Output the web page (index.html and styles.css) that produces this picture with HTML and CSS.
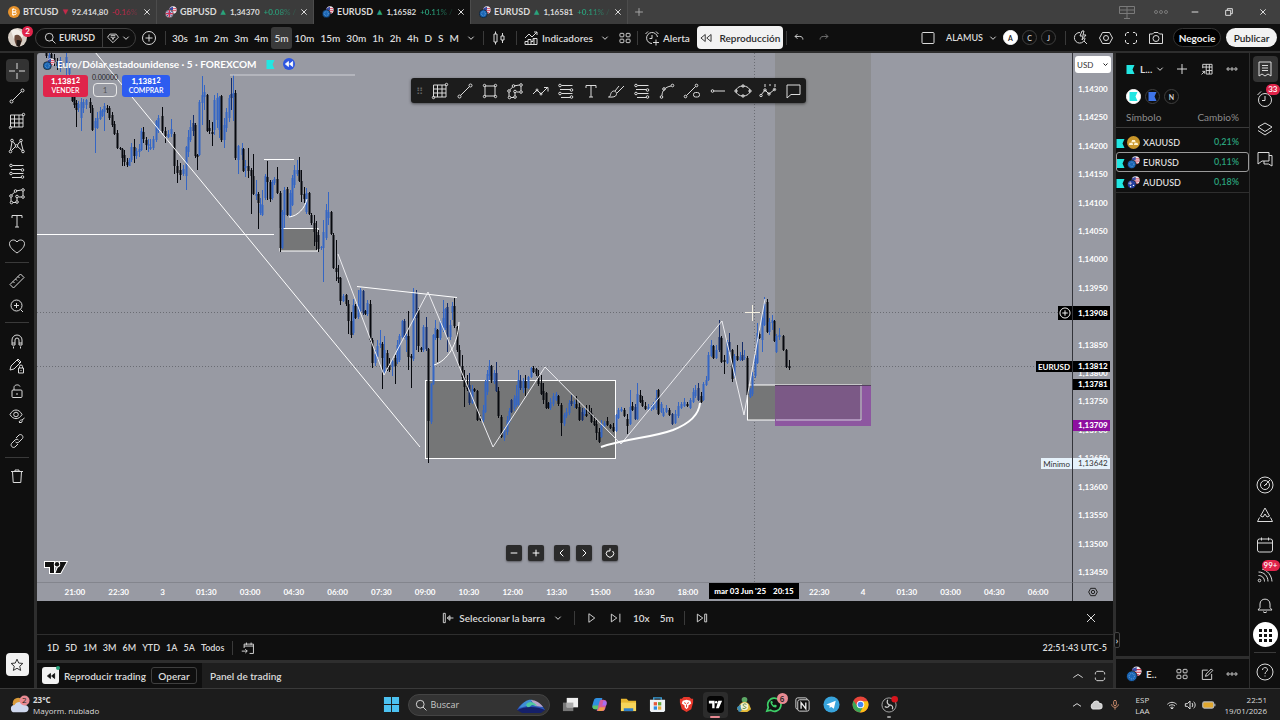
FILE: index.html
```html
<!DOCTYPE html>
<html lang="es">
<head>
    <meta charset="UTF-8">
    <meta name="viewport" content="width=device-width, initial-scale=1.0">
    <title>EURUSD 1,16582 +0.11%</title>
    <link rel="stylesheet" href="styles.css">
</head>
<body>
    <!-- Icon set -->
    <svg class="sprite" aria-hidden="true">
        <symbol id="i-close" viewBox="0 0 18 18"><path d="M5 5l8 8M13 5l-8 8"/></symbol>
        <symbol id="i-plus" viewBox="0 0 18 18"><path d="M9 4v10M4 9h10"/></symbol>
        <symbol id="i-minus" viewBox="0 0 18 18"><path d="M4 9h10"/></symbol>
        <symbol id="i-down" viewBox="0 0 18 18"><path d="M5 7l4 4 4-4"/></symbol>
        <symbol id="i-up" viewBox="0 0 18 18"><path d="M3 11l6-4 6 4"/></symbol>
        <symbol id="i-left" viewBox="0 0 18 18"><path d="M11 4L6 9l5 5"/></symbol>
        <symbol id="i-right" viewBox="0 0 18 18"><path d="M7 4l5 5-5 5"/></symbol>
        <symbol id="i-reset" viewBox="0 0 18 18"><path d="M5 6a5.5 5.5 0 1 0 8 0M5 6h4M9 6V2"/></symbol>
        <symbol id="i-dots" viewBox="0 0 18 18"><circle cx="4" cy="9" r="1.5"/><circle cx="9" cy="9" r="1.5"/><circle cx="14" cy="9" r="1.5"/></symbol>
        <symbol id="i-search" viewBox="0 0 18 18"><circle cx="8" cy="8" r="5"/><path d="M11.500 11.500L16 16"/></symbol>
        <symbol id="i-gem" viewBox="0 0 18 18"><path d="M5 4h8l3 4-7 7-7-7zM6 8h2l1 3 1-3h2M6 6h6"/></symbol>
        <symbol id="i-add" viewBox="0 0 18 18"><circle cx="9" cy="9" r="6.5"/><path d="M9 5.500v7M5.500 9h7"/></symbol>
        <symbol id="i-candles" viewBox="0 0 18 18"><path d="M4 5h3v8H4zM5.500 2.500V5M5.500 13v2.500M11 7h3v4h-3zM12.500 4v3M12.500 11v3"/></symbol>
        <symbol id="i-indicators" viewBox="0 0 18 18"><path d="M3 9l4-4 3 3 5-5M12 3h3v3M3 15.500v-3h3v-2h3v2h2v-3h4v6zM6 12.500v3M9 12.500v3M12 10v5"/></symbol>
        <symbol id="i-grid4" viewBox="0 0 18 18"><rect x="2.500" y="3" width="5" height="4.500" rx="1"/><rect x="10.500" y="3" width="5" height="4.500" rx="1"/><rect x="2.500" y="10.500" width="5" height="4.500" rx="1"/><rect x="10.500" y="10.500" width="5" height="4.500" rx="1"/></symbol>
        <symbol id="i-alert" viewBox="0 0 18 18"><path d="M14.500 8A5.500 5.500 0 1 0 9 14.500M9 6v3.500H6.500M2.500 5l2.500-2.500M13 2.500L15.500 5M13 10.500v6M10 13.500h6"/></symbol>
        <symbol id="i-rewind" viewBox="0 0 18 18"><path d="M8 4.500v9L2.500 9zM15.500 4.500v9L10 9z"/></symbol>
        <symbol id="i-undo" viewBox="0 0 18 18"><path d="M7 4L4 7l3 3M4 7h6c3 0 4 2 4 4"/></symbol>
        <symbol id="i-redo" viewBox="0 0 18 18"><path d="M11 4l3 3-3 3M14 7H8c-3 0-4 2-4 4"/></symbol>
        <symbol id="i-layout" viewBox="0 0 18 18"><rect x="3" y="3.500" width="12" height="11" rx="1"/></symbol>
        <symbol id="i-quick" viewBox="0 0 18 18"><path d="M8 3.500A5.300 5.300 0 1 0 13 9M12 12l3 3M10 2L8 7h3l-1 4 4-5h-3l1-4z"/></symbol>
        <symbol id="i-settings" viewBox="0 0 18 18"><path d="M5.500 3.500h7L15.500 9l-3 5.500h-7L2.500 9z"/><circle cx="9" cy="9" r="2.500"/></symbol>
        <symbol id="i-full" viewBox="0 0 18 18"><path d="M3.500 7V5L5 3.500h2M11 3.500h2L14.500 5v2M14.500 11v2L13 14.500h-2M7 14.500H5L3.500 13v-2"/></symbol>
        <symbol id="i-camera" viewBox="0 0 18 18"><path d="M2.500 5h3L7 3.500h4L12.500 5h3v9.500h-13z"/><circle cx="9" cy="9.500" r="3"/></symbol>
        <symbol id="i-cross" viewBox="0 0 18 18"><path d="M9 1v6M9 11v6M1 9h6M11 9h6"/></symbol>
        <symbol id="i-trend" viewBox="0 0 18 18"><circle cx="3.500" cy="14.500" r="1.500"/><circle cx="14.500" cy="3.500" r="1.500"/><path d="M4.500 13.500l9-9"/></symbol>
        <symbol id="i-gann" viewBox="0 0 18 18"><path d="M2.500 3v12h12.500V3zM2.500 7h12.500M2.500 11h12.500M6.500 3v12M11 3v12"/><circle cx="2.500" cy="15.500" r="1.200"/><circle cx="15.500" cy="2.500" r="1.200"/></symbol>
        <symbol id="i-pattern" viewBox="0 0 18 18"><circle cx="4" cy="3.500" r="1.300"/><circle cx="13" cy="3.500" r="1.300"/><circle cx="8.500" cy="9" r="1.300"/><circle cx="2.500" cy="14.500" r="1.300"/><circle cx="15" cy="14.500" r="1.300"/><path d="M4 5l-1.500 8M13 5l2 8M5 4.500L7.500 8M12 4.500L9.500 8M3.500 13.500l4-4M14 13.500l-4.500-4"/></symbol>
        <symbol id="i-fib" viewBox="0 0 18 18"><path d="M4.500 3.500h11M3 7.500h10M4.500 11.500h11M4 15.500h9"/><circle cx="3" cy="3.500" r="1.300"/><circle cx="14.500" cy="8" r="1.300"/><circle cx="3" cy="11.500" r="1.300"/><circle cx="14.500" cy="15" r="1.300"/></symbol>
        <symbol id="i-shape" viewBox="0 0 18 18"><path d="M8.500 3.800L13.500 3M15 4.500v4M13.500 10H10.500M9 10.500v3M3.800 7.800L6.800 5M3 10.500v4M5 15.500h3"/><circle cx="7.500" cy="4" r="1.300"/><circle cx="15" cy="3" r="1.300"/><circle cx="15" cy="10" r="1.300"/><circle cx="3" cy="9" r="1.300"/><circle cx="3.500" cy="15.500" r="1.300"/><circle cx="9" cy="15" r="1.300"/><circle cx="9" cy="9.500" r="1.300"/></symbol>
        <symbol id="i-text" viewBox="0 0 18 18"><path d="M4 6V3.500h10V6M9 3.500v11.500M7 15h4"/></symbol>
        <symbol id="i-heart" viewBox="0 0 18 18"><path d="M9 16C5 13 1.500 10.500 1.500 6.500 1.500 3 6.500 1.500 9 5c2.500-3.500 7.500-2 7.500 1.500C16.500 10.500 13 13 9 16z"/></symbol>
        <symbol id="i-ruler" viewBox="0 0 18 18"><path d="M2 12.500L12.500 2 16 5.500 5.500 16zM5 9.500L6.500 11M7.500 7L9 8.500M10 4.500L11.500 6"/></symbol>
        <symbol id="i-zoom" viewBox="0 0 18 18"><circle cx="8.500" cy="8.500" r="5.500"/><path d="M12.500 12.500l2.500 2.500M8.500 6v5M6 8.500h5"/></symbol>
        <symbol id="i-magnet" viewBox="0 0 18 18"><path d="M4 13V8a5 5 0 0 1 10 0v5h-3V8a2 2 0 0 0-4 0v5zM4 11h3M11 11h3M5.500 14.500v2M12.500 14.500v2"/></symbol>
        <symbol id="i-lockpen" viewBox="0 0 18 18"><path d="M2 13l1-4 7-7 3 3-7 7zM9 3l3 3M10.500 11h5v5h-5zM11.500 11V9.500a1.500 1.500 0 0 1 3 0V11M13 13v1"/></symbol>
        <symbol id="i-lock" viewBox="0 0 18 18"><rect x="4" y="8" width="10" height="7.500" rx="1"/><path d="M6 8V5.500C6 2.500 11 2 12 4.500M9 11v2"/></symbol>
        <symbol id="i-eye" viewBox="0 0 18 18"><path d="M2 7.500c3-6 9-6 12 0-3 5.500-9 5.500-12 0zM11 15c1-2 2-2 3-2l2.500-2M11 15.500h2.500l1-2"/><circle cx="8" cy="7.500" r="2.300"/></symbol>
        <symbol id="i-link" viewBox="0 0 18 18"><path d="M8 6l3-3c2-1.500 5 1 3.500 3.500L11 10c-1 1-3 1-3.500 0M10 12l-3 3c-2 1.500-5-1-3.500-3.500L7 8c1-1 3-1 3.500 0"/></symbol>
        <symbol id="i-trash" viewBox="0 0 18 18"><path d="M3 4.500h12M7 4.500V3h4v1.500M4.500 4.500l.7 11h7.600l.7-11"/></symbol>
        <symbol id="i-star" viewBox="0 0 18 18"><path d="M9 1.500l2.200 5 5.300.5-4 3.600 1.200 5.400L9 13.200 4.300 16l1.200-5.400-4-3.600 5.300-.5z"/></symbol>
        <symbol id="i-rect" viewBox="0 0 18 18"><path d="M4 4h10v10H4z"/><circle cx="3.500" cy="3.500" r="1.200"/><circle cx="14.500" cy="3.500" r="1.200"/><circle cx="3.500" cy="14.500" r="1.200"/><circle cx="14.500" cy="14.500" r="1.200"/></symbol>
        <symbol id="i-path" viewBox="0 0 18 18"><path d="M1 12l4-4 4 4 6-6M12 5.500h4v4"/><circle cx="5" cy="8" r="1"/><circle cx="9" cy="12" r="1"/></symbol>
        <symbol id="i-brush" viewBox="0 0 18 18"><path d="M1.500 15c3 0 1-5 5-6 3 0 4 3 2 5-2 1.500-5 1-7 1zM8 9l4-5M10 11l7-7"/></symbol>
        <symbol id="i-curve" viewBox="0 0 18 18"><path d="M4 13.500C4 9 7 5 13 4"/><circle cx="3.500" cy="15" r="1.300"/><circle cx="6" cy="7" r="1.300"/><circle cx="14.500" cy="3.500" r="1.300"/></symbol>
        <symbol id="i-info" viewBox="0 0 18 18"><path d="M3.500 13.500l9-9"/><circle cx="2.500" cy="14.500" r="1.300"/><circle cx="13.500" cy="3.500" r="1.300"/><rect x="10.500" y="10.500" width="6" height="4.500" rx="2"/></symbol>
        <symbol id="i-ray" viewBox="0 0 18 18"><circle cx="3.500" cy="9" r="1.300"/><path d="M5 9h11"/></symbol>
        <symbol id="i-ellipse" viewBox="0 0 18 18"><ellipse cx="9" cy="9" rx="7" ry="5"/><circle cx="2" cy="9" r="1.200"/><circle cx="16" cy="9" r="1.200"/><circle cx="9" cy="4" r="1.200"/><circle cx="9" cy="14" r="1.200"/></symbol>
        <symbol id="i-elliott" viewBox="0 0 18 18"><path d="M2 13l4-5 4 4 6-5M6 2v3M11 2v2M16 2v3"/><circle cx="2" cy="13.500" r="1.200"/><circle cx="6" cy="8" r="1.200"/><circle cx="10" cy="12" r="1.200"/><circle cx="15.500" cy="7.500" r="1.200"/></symbol>
        <symbol id="i-note" viewBox="0 0 18 18"><path d="M3 3h13v9.500H7L3 16z"/></symbol>
        <symbol id="i-tableadd" viewBox="0 0 18 18"><path d="M3.500 8V3h12v12.500H8M3.500 6.500h12M8 11h7.500M8 3v12.500M12 3v12.500M2 16l4-4M3 12h3v3"/></symbol>
        <symbol id="i-list" viewBox="0 0 18 18"><path d="M3 2h12v14l-3-2-3 2-3-2-3 2zM6 5.500h6M6 8h6M6 10.500h6"/></symbol>
        <symbol id="i-clock" viewBox="0 0 18 18"><circle cx="9" cy="10" r="6.500"/><path d="M9 6v4.500H6M1.500 5L5 1.500"/></symbol>
        <symbol id="i-layers" viewBox="0 0 18 18"><path d="M9 3l7 4-7 4.500L2 7zM2 10.500L9 15l7-4.500"/></symbol>
        <symbol id="i-chat" viewBox="0 0 18 18"><path d="M2 2.500h11v8.500H6L2 14zM13 5.500h3V16l-3.500-2H8v-3"/></symbol>
        <symbol id="i-target" viewBox="0 0 18 18"><circle cx="9" cy="9" r="8"/><circle cx="9" cy="9" r="4.500"/><path d="M8 10l6-6M9 9l2-1"/></symbol>
        <symbol id="i-pyramid" viewBox="0 0 18 18"><path d="M9 2l4.500 8-2.500 1-2-3-2 3-2.500-1zM3.500 11.500l-2 4h15l-2-4"/></symbol>
        <symbol id="i-calendar" viewBox="0 0 18 18"><rect x="1.500" y="3" width="15" height="13" rx="2"/><path d="M2 7h14M5.500 1.500v3M12.500 1.500v3"/></symbol>
        <symbol id="i-feed" viewBox="0 0 18 18"><circle cx="3.500" cy="14.500" r="1.300"/><path d="M2.500 9.500c3.500 0 6 2.500 6 6M2.500 6c5.500 0 9.500 4 9.500 9.500M6 3c5.500 1.500 9.500 6 10 12.500"/></symbol>
        <symbol id="i-bell" viewBox="0 0 18 18"><path d="M2 14l2-2.500V8c0-6.500 10-6.500 10 0v3.500l2 2.500zM7 15.500c1 1.500 3 1.500 4 0"/></symbol>
        <symbol id="i-help" viewBox="0 0 18 18"><circle cx="9" cy="9" r="8"/><path d="M6.500 7c0-3.500 5.500-3 5 0-.3 1.500-2.500 1.800-2.500 4M9 12.500v1"/></symbol>
        <symbol id="i-calgo" viewBox="0 0 18 18"><path d="M4 9V4h12v12h-5M4 6.500h12M7 2v3M13 2v3M1 13h7M5.500 10.500L8 13l-2.500 2.500"/></symbol>
        <symbol id="i-bar" viewBox="0 0 18 18"><path d="M3 3h2.500v12H3zM8 9h8M11.500 6v6L8 9z"/></symbol>
        <symbol id="i-play" viewBox="0 0 18 18"><path d="M5 3.500v11L12.500 9z"/></symbol>
        <symbol id="i-step" viewBox="0 0 18 18"><path d="M3 4v10l7-5zM14 3.500v11"/></symbol>
        <symbol id="i-live" viewBox="0 0 18 18"><path d="M3 4v10l7-5zM12.500 4h2.500v10h-2.500z"/></symbol>
        <symbol id="i-edit" viewBox="0 0 18 18"><path d="M10 4H3v12h12V9M7 12l1-3 6.500-6.500 2 2L10 11z"/></symbol>
        <symbol id="i-square" viewBox="0 0 18 18"><path d="M3 7V5l2-2h8l2 2v2M3 11v2l2 2h8l2-2v-2"/></symbol>
        <symbol id="i-windows" viewBox="0 0 18 18"><path d="M1.500 3.500h15v7h-15zM9 3.500v12M1.500 7h15M6 15.500h6"/></symbol>
        <symbol id="i-restore" viewBox="0 0 18 18"><path d="M4 6.500h7.500V14H4zM6.500 6.500V4H14v7.500h-2.500"/></symbol>
        <symbol id="flag-eur" viewBox="0 0 18 18"><circle cx="12" cy="6" r="5.500" fill="#f3e9ee"/><path d="M7 4h10M7 7h10M10 10h5" stroke="#d0324b" stroke-width="1.300"/><path d="M7 3l5-2v5H7z" fill="#3b4ea8"/><circle cx="6.500" cy="11.500" r="6" fill="#1b66b5" stroke="#101010"/><circle cx="6.500" cy="11.500" r="3" fill="none" stroke="#8cb6dd" stroke-dasharray="1 1.300"/></symbol>
        <symbol id="flag-gbp" viewBox="0 0 18 18"><circle cx="12" cy="6" r="5.500" fill="#f3e9ee"/><path d="M7 4h10M7 7h10" stroke="#d0324b" stroke-width="1.300"/><path d="M7 3l5-2v5H7z" fill="#3b4ea8"/><circle cx="6.500" cy="11.500" r="6" fill="#d9c6d8" stroke="#333"/><path d="M6.500 6v11M1 11.500h11" stroke="#d12f55" stroke-width="2"/><path d="M3 8l2 2M10 8l-2 2M3 15l2-2M10 15l-2-2" stroke="#2b4ba0" stroke-width="1.500"/></symbol>
        <symbol id="flag-aud" viewBox="0 0 18 18"><circle cx="12" cy="6" r="5.500" fill="#f3e9ee"/><path d="M7 4h10M7 7h10M10 10h5" stroke="#d0324b" stroke-width="1.300"/><path d="M7 3l5-2v5H7z" fill="#3b4ea8"/><circle cx="6.500" cy="11.500" r="6" fill="#2440a0" stroke="#101010"/><path d="M2 10h5M4.500 7.500v5" stroke="#e8d0da"/><circle cx="9" cy="13" r="1" fill="#fff"/><circle cx="5" cy="15" r="1" fill="#fff"/></symbol>
        <symbol id="coin-btc" viewBox="0 0 18 18"><circle cx="9" cy="9" r="9" fill="#e8932c"/><path d="M7 5v8M6 5h4c2.500 0 2.500 4 0 4H7h3.500c2.500 0 2.500 4 0 4H6M8 3.500V5M8 13v1.500" stroke="#fff" stroke-width="1.400"/></symbol>
        <symbol id="coin-gold" viewBox="0 0 18 18"><circle cx="9" cy="9" r="9" fill="#c9962a"/><path d="M7 5.500h4l1 3H6zM3.500 9.500h4l1 3h-6zM10.500 9.500h4l1 3h-6z" fill="#fff3d0"/></symbol>
        <symbol id="flag-mark" viewBox="0 0 18 18"><path d="M1 0h16l-4 9 4 9H1z"/></symbol>
        <symbol id="tv" viewBox="0 0 24 14"><path d="M1 1h9v11H6V6H1zM16.500 12h-5L16 1h6.500z"/><circle cx="13" cy="3.200" r="2.200"/></symbol>
    </svg>

    <!-- Window tabs -->
    <header class="titlebar">
        <div class="tab">
            <svg class="coin"><use href="#coin-btc"/></svg>
            <b>BTCUSD</b><i class="down">▼</i><span class="quote">92.414,80</span><span class="fade down">-0.16%</span>
            <button class="tab-close" aria-label="Cerrar"><svg class="icon-s"><use href="#i-close"/></svg></button>
        </div>
        <div class="tab">
            <svg class="coin"><use href="#flag-gbp"/></svg>
            <b>GBPUSD</b><i class="up">▲</i><span class="quote">1,34370</span><span class="fade up">+0.08% /</span>
            <button class="tab-close" aria-label="Cerrar"><svg class="icon-s"><use href="#i-close"/></svg></button>
        </div>
        <div class="tab active">
            <svg class="coin"><use href="#flag-eur"/></svg>
            <b>EURUSD</b><i class="up">▲</i><span class="quote">1,16582</span><span class="fade up">+0.11% /</span>
            <button class="tab-close" aria-label="Cerrar"><svg class="icon-s"><use href="#i-close"/></svg></button>
        </div>
        <div class="tab">
            <svg class="coin"><use href="#flag-eur"/></svg>
            <b>EURUSD</b><i class="up">▲</i><span class="quote">1,16581</span><span class="fade up">+0.11% /</span>
            <button class="tab-close" aria-label="Cerrar"><svg class="icon-s"><use href="#i-close"/></svg></button>
        </div>
        <button class="new-tab" aria-label="Nueva"><svg class="icon-m"><use href="#i-plus"/></svg></button>
        <div class="window-buttons">
            <button class="dim" aria-label="Ventanas"><svg class="icon"><use href="#i-windows"/></svg></button>
            <button class="dim" aria-label="Más"><svg class="icon"><use href="#i-dots"/></svg></button>
            <button aria-label="Minimizar"><svg class="icon-s"><use href="#i-minus"/></svg></button>
            <button aria-label="Restaurar"><svg class="icon-s"><use href="#i-restore"/></svg></button>
            <button aria-label="Cerrar"><svg class="icon-s"><use href="#i-close"/></svg></button>
        </div>
    </header>

    <!-- Top toolbar -->
    <div class="toolbar">
        <button class="avatar" aria-label="Perfil">
            <svg viewBox="0 0 20 20"><circle cx="10" cy="10" r="10" fill="#d8cfc6"/><path d="M3 3c6-4 12 0 13 6l-5 3-5-1z" fill="#f4efe9"/><path d="M7 8c3-2 7 0 8 5l-3 7c-4-1-6-6-5-12z" fill="#6b4a3b"/><path d="M9 13c2-1 4 0 5 1l-2 6-3-1z" fill="#1d1614"/></svg>
            <span class="badge">2</span>
        </button>
        <div class="symbol-box">
            <button class="symbol-search"><svg class="icon-m"><use href="#i-search"/></svg>EURUSD</button>
            <button class="symbol-fav" aria-label="Marcas"><svg class="icon-m"><use href="#i-gem"/></svg><svg class="icon-s"><use href="#i-down"/></svg></button>
        </div>
        <button class="cell" aria-label="Comparar"><svg class="icon"><use href="#i-add"/></svg></button>
        <span class="sep"></span>
        <div class="intervals">
            <button>30s</button><button>1m</button><button>2m</button><button>3m</button><button>4m</button><button class="on">5m</button><button>10m</button><button>15m</button><button>30m</button><button>1h</button><button>2h</button><button>4h</button><button>D</button><button>S</button><button>M</button>
            <button aria-label="Intervalos"><svg class="icon-s"><use href="#i-down"/></svg></button>
        </div>
        <span class="sep"></span>
        <button class="cell wide" aria-label="Velas"><svg class="icon"><use href="#i-candles"/></svg></button>
        <span class="sep"></span>
        <button class="labelled ind"><svg class="icon"><use href="#i-indicators"/></svg>Indicadores</button>
        <button class="cell slim" aria-label="Favoritos"><svg class="icon-s"><use href="#i-down"/></svg></button>
        <button class="cell slim" aria-label="Plantillas"><svg class="icon-m"><use href="#i-grid4"/></svg></button>
        <span class="sep"></span>
        <button class="labelled"><svg class="icon"><use href="#i-alert"/></svg>Alerta</button>
        <button class="replay-btn"><svg class="icon-m"><use href="#i-rewind"/></svg>Reproducción</button>
        <span class="sep"></span>
        <button class="cell" aria-label="Deshacer"><svg class="icon-m"><use href="#i-undo"/></svg></button>
        <button class="cell dim" aria-label="Rehacer"><svg class="icon-m"><use href="#i-redo"/></svg></button>
        <div class="toolbar-right">
            <button class="cell" aria-label="Diseño"><svg class="icon"><use href="#i-layout"/></svg></button>
            <button class="layout-name">ALAMUS<svg class="icon-s"><use href="#i-down"/></svg></button>
            <button class="round on">A</button>
            <button class="round">C</button>
            <button class="round">J</button>
            <span class="sep"></span>
            <button class="cell" aria-label="Búsqueda rápida"><svg class="icon"><use href="#i-quick"/></svg></button>
            <button class="cell" aria-label="Configuración"><svg class="icon"><use href="#i-settings"/></svg></button>
            <button class="cell" aria-label="Pantalla completa"><svg class="icon"><use href="#i-full"/></svg></button>
            <button class="cell" aria-label="Captura"><svg class="icon"><use href="#i-camera"/></svg></button>
            <button class="pill dark">Negocie</button>
            <button class="pill">Publicar</button>
        </div>
    </div>

    <main class="workspace">
        <!-- Drawing tools -->
        <nav class="tools">
            <button class="on" aria-label="Cruz"><svg class="icon"><use href="#i-cross"/></svg></button>
            <button aria-label="Tendencia"><svg class="icon"><use href="#i-trend"/></svg></button>
            <button aria-label="Gann"><svg class="icon"><use href="#i-gann"/></svg></button>
            <button aria-label="Patrones"><svg class="icon"><use href="#i-pattern"/></svg></button>
            <button aria-label="Fibonacci"><svg class="icon"><use href="#i-fib"/></svg></button>
            <button aria-label="Formas"><svg class="icon"><use href="#i-shape"/></svg></button>
            <button aria-label="Texto"><svg class="icon"><use href="#i-text"/></svg></button>
            <button aria-label="Iconos"><svg class="icon"><use href="#i-heart"/></svg></button>
            <hr>
            <button aria-label="Regla"><svg class="icon"><use href="#i-ruler"/></svg></button>
            <button aria-label="Ampliar"><svg class="icon"><use href="#i-zoom"/></svg></button>
            <hr>
            <button aria-label="Imán"><svg class="icon"><use href="#i-magnet"/></svg></button>
            <button aria-label="Modo dibujo"><svg class="icon"><use href="#i-lockpen"/></svg></button>
            <button aria-label="Bloquear"><svg class="icon"><use href="#i-lock"/></svg></button>
            <button aria-label="Ocultar"><svg class="icon"><use href="#i-eye"/></svg></button>
            <button aria-label="Enlazar"><svg class="icon"><use href="#i-link"/></svg></button>
            <hr>
            <button aria-label="Eliminar"><svg class="icon"><use href="#i-trash"/></svg></button>
            <button class="star" aria-label="Favoritos"><svg class="icon-m"><use href="#i-star"/></svg></button>
        </nav>

        <div class="center">
            <section class="chart">
                <div class="stage">
                    <svg class="plot" role="img" aria-label="Velas EURUSD 5 minutos">
                        <g transform="translate(-37 -53)">
                            <rect x="775" y="53" width="96" height="332" fill="#8c8d90"/>
                            <rect x="425.500" y="380.500" width="190" height="78" class="zone"/>
                            <rect x="280" y="228.500" width="38" height="22.500" class="zone"/>
                            <path d="M37 366.500h1036M37 312.500h1036M754.500 53v530" class="dotted"/>
                            <rect x="747.500" y="385" width="114" height="35" class="zone"/>
                            <rect x="775" y="385" width="96" height="41" fill="#8d57a0"/>
                            <rect x="775" y="385" width="87" height="34" fill="#7b5986"/>
                            <path d="M776 420h85V385" class="line soft"/>
                            <path d="M775 385.500h96" stroke="#55405f"/>
                            <g id="candles"></g>
                            <path d="M95 52L420 447M37 234.500h237M264 159.500h30M357 286.500l100 11" class="line"/>
                            <path d="M230 75h125" class="line soft"/>
                            <path d="M338 254l46 121 44-83 65 155 52-80 76 77 101-123 22 94 21-116" class="line thin"/>
                            <path d="M289 217c9-1 16-9 18-18M434 365c13-4 24-20 25-43" class="line"/>
                            <path d="M601 447c27-9 50-9 72-17 18-7 26-16 27-27" class="line thick"/>
                            <path d="M752.500 305v16M745 312.500h15" stroke="#f4efe0"/>
                        </g>
                    </svg>

                    <div class="legend">
                        <svg class="coin"><use href="#flag-eur"/></svg>
                        <h1>Euro/Dólar estadounidense · 5 · FOREXCOM</h1>
                        <svg class="mark cyan"><use href="#flag-mark"/></svg>
                        <span class="replay-dot"><svg class="icon-s"><use href="#i-rewind"/></svg></span>
                    </div>
                    <div class="orders">
                        <button class="order sell"><b>1,1381<sup>2</sup></b>VENDER</button>
                        <label class="qty">0.00000<input type="text" value="1"></label>
                        <button class="order buy"><b>1,1381<sup>2</sup></b>COMPRAR</button>
                    </div>

                    <div class="favbar">
                        <span class="grip">⠿</span>
                        <button aria-label="Gann"><svg class="icon"><use href="#i-gann"/></svg></button>
                        <button aria-label="Tendencia"><svg class="icon"><use href="#i-trend"/></svg></button>
                        <button aria-label="Rectángulo"><svg class="icon"><use href="#i-rect"/></svg></button>
                        <button aria-label="Forma"><svg class="icon"><use href="#i-shape"/></svg></button>
                        <button aria-label="Ruta"><svg class="icon"><use href="#i-path"/></svg></button>
                        <button aria-label="Fibonacci"><svg class="icon"><use href="#i-fib"/></svg></button>
                        <button aria-label="Texto"><svg class="icon"><use href="#i-text"/></svg></button>
                        <button aria-label="Pincel"><svg class="icon"><use href="#i-brush"/></svg></button>
                        <button aria-label="Extensión"><svg class="icon"><use href="#i-fib"/></svg></button>
                        <button aria-label="Curva"><svg class="icon"><use href="#i-curve"/></svg></button>
                        <button aria-label="Información"><svg class="icon"><use href="#i-info"/></svg></button>
                        <button aria-label="Rayo"><svg class="icon"><use href="#i-ray"/></svg></button>
                        <button aria-label="Elipse"><svg class="icon"><use href="#i-ellipse"/></svg></button>
                        <button aria-label="Elliott"><svg class="icon"><use href="#i-elliott"/></svg></button>
                        <button aria-label="Nota"><svg class="icon"><use href="#i-note"/></svg></button>
                    </div>

                    <div class="zoom-nav">
                        <button aria-label="Alejar"><svg class="icon-s"><use href="#i-minus"/></svg></button>
                        <button aria-label="Acercar"><svg class="icon-s"><use href="#i-plus"/></svg></button>
                        <button class="apart" aria-label="Izquierda"><svg class="icon-s"><use href="#i-left"/></svg></button>
                        <button aria-label="Derecha"><svg class="icon-s"><use href="#i-right"/></svg></button>
                        <button class="apart" aria-label="Restablecer"><svg class="icon-s"><use href="#i-reset"/></svg></button>
                    </div>
                    <svg class="tv-mark"><use href="#tv"/></svg>
                    <span class="axis-name plus"><svg class="icon-m"><use href="#i-add"/></svg></span>
                    <span class="axis-name sym">EURUSD</span>
                    <span class="axis-name min">Mínimo</span>
                </div>

                <div class="price-axis">
                    <select class="currency" aria-label="Moneda"><option>USD</option></select>
                    <svg class="currency-arrow"><use href="#i-down"/></svg>
                    <span>1,14300</span><span>1,14250</span><span>1,14200</span><span>1,14150</span><span>1,14100</span><span>1,14050</span><span>1,14000</span><span>1,13950</span><span>&nbsp;</span><span>1,13850</span><span>1,13800</span><span>1,13750</span><span>1,13700</span><span>1,13650</span><span>1,13600</span><span>1,13550</span><span>1,13500</span><span>1,13450</span>
                    <b class="tag cursor">1,13908</b>
                    <b class="tag last">1,13812</b>
                    <b class="tag entry">1,13781</b>
                    <b class="tag stop">1,13709</b>
                    <b class="tag low">1,13642</b>
                </div>

                <div class="time-axis">
                    <span>21:00</span><span>22:30</span><span>3</span><span>01:30</span><span>03:00</span><span>04:30</span><span>06:00</span><span>07:30</span><span>09:00</span><span>10:30</span><span>12:00</span><span>13:30</span><span>15:00</span><span>16:30</span><span>18:00</span><span></span><span></span><span>22:30</span><span>4</span><span>01:30</span><span>03:00</span><span>04:30</span><span>06:00</span>
                    <b class="time-tag"><span>mar 03 Jun '25</span><span>20:15</span></b>
                </div>
                <button class="axis-settings" aria-label="Escala"><svg class="icon-s"><use href="#i-settings"/></svg></button>
            </section>

            <div class="replay-bar">
                <div class="replay-controls">
                    <button><svg class="icon-m"><use href="#i-bar"/></svg>Seleccionar la barra<svg class="icon-s gap-left"><use href="#i-down"/></svg></button>
                    <span class="sep"></span>
                    <button aria-label="Reproducir"><svg class="icon-m"><use href="#i-play"/></svg></button>
                    <button aria-label="Avanzar"><svg class="icon-m"><use href="#i-step"/></svg></button>
                    <button>10x</button>
                    <button>5m</button>
                    <span class="sep"></span>
                    <button aria-label="Tiempo real"><svg class="icon-m"><use href="#i-live"/></svg></button>
                </div>
                <button aria-label="Cerrar"><svg class="icon"><use href="#i-close"/></svg></button>
            </div>

            <div class="range-bar">
                <button>1D</button><button>5D</button><button>1M</button><button>3M</button><button>6M</button><button>YTD</button><button>1A</button><button>5A</button><button>Todos</button>
                <span class="sep"></span>
                <button aria-label="Ir a"><svg class="icon-m"><use href="#i-calgo"/></svg></button>
                <span class="utc">22:51:43 UTC-5</span>
            </div>

            <div class="account-bar">
                <div class="account-tab">
                    <span class="replay-chip"><svg class="icon-s"><use href="#i-rewind"/></svg></span>
                    Reproducir trading
                    <button class="outline">Operar</button>
                </div>
                <span class="panel-name">Panel de trading</span>
                <button aria-label="Abrir"><svg class="icon-m"><use href="#i-up"/></svg></button>
                <button aria-label="Maximizar"><svg class="icon-m"><use href="#i-square"/></svg></button>
            </div>
        </div>

        <!-- Watchlist -->
        <aside class="watch">
            <div class="watch-head">
                <svg class="mark cyan"><use href="#flag-mark"/></svg><b>L...</b><svg class="icon-s"><use href="#i-down"/></svg>
                <button aria-label="Añadir"><svg class="icon"><use href="#i-plus"/></svg></button>
                <button aria-label="Tabla"><svg class="icon-m"><use href="#i-tableadd"/></svg></button>
                <button aria-label="Más"><svg class="icon-m"><use href="#i-dots"/></svg></button>
            </div>
            <div class="watch-lists">
                <button class="round on" aria-label="Lista cian"><svg class="mark cyan"><use href="#flag-mark"/></svg></button>
                <button class="round" aria-label="Lista azul"><svg class="mark blue"><use href="#flag-mark"/></svg></button>
                <button class="round">N</button>
            </div>
            <table>
                <thead><tr><th>Símbolo</th><th>Cambio%</th></tr></thead>
                <tbody>
                    <tr><td><svg class="mark cyan"><use href="#flag-mark"/></svg><svg class="coin"><use href="#coin-gold"/></svg>XAUUSD</td><td>0,21%</td></tr>
                    <tr class="on"><td><svg class="mark cyan"><use href="#flag-mark"/></svg><svg class="coin"><use href="#flag-eur"/></svg>EURUSD</td><td>0,11%</td></tr>
                    <tr><td><svg class="mark cyan"><use href="#flag-mark"/></svg><svg class="coin"><use href="#flag-aud"/></svg>AUDUSD</td><td>0,18%</td></tr>
                </tbody>
            </table>
            <div class="watch-foot">
                <svg class="coin big"><use href="#flag-eur"/></svg><b>E..</b>
                <button aria-label="Vista"><svg class="icon-m"><use href="#i-grid4"/></svg></button>
                <button aria-label="Editar"><svg class="icon-m"><use href="#i-edit"/></svg></button>
                <button aria-label="Más"><svg class="icon-m"><use href="#i-dots"/></svg></button>
            </div>
            <button class="handle" aria-label="Contraer">›</button>
        </aside>

        <nav class="rail">
            <button class="on" aria-label="Lista"><svg class="icon"><use href="#i-list"/></svg></button>
            <button aria-label="Alertas"><svg class="icon"><use href="#i-clock"/></svg><span class="badge">33</span></button>
            <button aria-label="Objetos"><svg class="icon"><use href="#i-layers"/></svg></button>
            <button aria-label="Chat"><svg class="icon"><use href="#i-chat"/></svg></button>
            <button class="push" aria-label="Filtros"><svg class="icon"><use href="#i-target"/></svg></button>
            <button aria-label="Pine"><svg class="icon"><use href="#i-pyramid"/></svg></button>
            <button aria-label="Calendario"><svg class="icon"><use href="#i-calendar"/></svg></button>
            <button aria-label="Noticias"><svg class="icon"><use href="#i-feed"/></svg><span class="badge">99+</span></button>
            <button aria-label="Notificaciones"><svg class="icon"><use href="#i-bell"/></svg></button>
            <button class="apps" aria-label="Productos"><svg viewBox="0 0 24 24"><path d="M6 6h3v3H6zM11 6h3v3h-3zM16 6h3v3h-3zM6 11h3v3H6zM11 11h3v3h-3zM16 11h3v3h-3zM6 16h3v3H6zM11 16h3v3h-3zM16 16h3v3h-3z"/></svg></button>
            <hr>
            <button aria-label="Ayuda"><svg class="icon"><use href="#i-help"/></svg></button>
        </nav>
    </main>

    <!-- Windows taskbar -->
    <footer class="taskbar">
        <div class="weather">
            <svg viewBox="0 0 22 22"><circle cx="9" cy="9" r="6" fill="#d99a3a"/><path d="M5 19a4 4 0 0 1 0-8c2-5 10-4 11 0 6 0 6 8 0 8z" fill="#cfd8ee"/><circle cx="16" cy="6" r="5.500" fill="#e88a92"/></svg>
            <span class="weather-n">2</span>
            <div><b>23°C</b><br>Mayorm. nublado</div>
        </div>
        <div class="apps-row">
            <button aria-label="Inicio"><svg viewBox="0 0 18 18"><path d="M1 1h7.500v7.500H1zM9.500 1H17v7.500H9.500zM1 9.500h7.500V17H1zM9.500 9.500H17V17H9.500z" fill="#4cc2f1"/></svg></button>
            <label class="task-search">
                <svg class="icon-m"><use href="#i-search"/></svg>
                <input type="text" placeholder="Buscar" aria-label="Buscar">
                <svg class="art" viewBox="0 0 32 18"><path d="M2 14C8 2 24 2 30 14z" fill="#2a55b8"/><path d="M4 12c5-7 9-9 14-8l-6 6z" fill="#3f8fd6"/><path d="M16 4c5 0 9 3 12 7l-8-1z" fill="#b9a3c8"/><path d="M11 9c3-5 8-3 11 1l-5-1-4 3z" fill="#4ec8a0"/><path d="M2 14c8-4 20-4 28 0l-4 3H7z" fill="#15206a"/></svg>
            </label>
            <button aria-label="Vista de tareas"><svg viewBox="0 0 18 18"><path d="M1 7h11v9H1z" fill="#777"/><path d="M5 2h12v10H5z" fill="#eee"/><path d="M5 7h7v5H5z" fill="#aaa"/></svg></button>
            <button aria-label="Copilot"><svg viewBox="0 0 18 18"><path d="M6 2h6l-3 12H5c-4 0-4-3-3-6s1-6 4-6z" fill="#2f8fe0"/><path d="M12 4h1c4 0 4 3 3 6s-1 6-4 6H6l3-10c.5-1.500 1-2 3-2z" fill="#d65ba0"/><path d="M2 10l6 0-1 4H4c-2 0-3-2-2-4z" fill="#5fc36a"/><path d="M13 5c4 0 4 2 3 5h-4z" fill="#a86ff0"/><path d="M9 12h6c-1 3-2 4-4 4H7z" fill="#f09a4a"/></svg></button>
            <button aria-label="Explorador"><svg viewBox="0 0 18 18"><path d="M1 3h6l2 2h8v11H1z" fill="#e8b731"/><path d="M1 7h16v9H1z" fill="#f7d55a"/><path d="M4 13h10v3H4z" fill="#2f7fc8"/></svg></button>
            <button aria-label="Tienda"><svg viewBox="0 0 18 18"><path d="M5 4V2h8v2" fill="none" stroke="#3a9fd8" stroke-width="1.500"/><path d="M1 4h16v11l-1 2H2l-1-2z" fill="#eef2f5"/><path d="M5 6.500h3.500V10H5z" fill="#e5593b"/><path d="M9.500 6.500H13V10H9.500z" fill="#66a83c"/><path d="M5 11h3.500v3.500H5z" fill="#2d8be0"/><path d="M9.500 11H13v3.500H9.500z" fill="#e8a93a"/></svg></button>
            <button aria-label="Brave"><svg viewBox="0 0 18 18"><path d="M6 1h6l2 2 2 0 0 4-2 7-5 3-5-3-2-7 0-4 2 0z" fill="#e8382b"/><path d="M5 5l4-1 4 1 1 3-3 2 0 2-2 2-2-2 0-2-3-2z" fill="#fff"/><path d="M6.500 7l2 1M11.500 7l-2 1M9 9v3" stroke="#e8382b"/></svg></button>
            <button class="current" aria-label="TradingView"><svg viewBox="0 0 18 18"><rect width="18" height="18" rx="4" fill="#050505"/><path d="M2 5h6v8H5.500V8H2zM12.500 13H9.500L12 5h4z" fill="#fff"/><circle cx="9.700" cy="6.500" r="1.300" fill="#fff"/></svg></button>
            <button aria-label="Finanzas"><svg viewBox="0 0 18 18"><circle cx="9" cy="4" r="3" fill="#5da866"/><path d="M4 9c3-4 7-4 10 0l2 5-4 3H5l-4-3z" fill="#e3b936"/><path d="M1 12l4-3 1 7-3 1z" fill="#3f8fb8"/><circle cx="9" cy="11" r="4" fill="#f3efd4"/><path d="M11 9c-3-2-5 1-2 2s1 3-2 2" fill="none" stroke="#5a8a3c"/></svg></button>
            <button aria-label="WhatsApp"><svg viewBox="0 0 18 18"><path d="M2 16l1.500-4A7 7 0 1 1 6 15z" fill="#111" stroke="#3ecf68" stroke-width="1.800"/><path d="M6 5.500c-1 3 3 7.500 6 6.500l.5-2-2-1-1 1-2-2 .8-1-.8-2z" fill="#3ecf68"/></svg><span class="badge">6</span></button>
            <button aria-label="Notion"><svg viewBox="0 0 18 18"><rect x="2" y="2" width="12" height="12" rx="2" fill="#111" stroke="#ddd"/><rect x="4" y="4" width="12" height="12" rx="2" fill="#111" stroke="#ddd"/><path d="M7.500 13.500V7l5 6.500V7" fill="none" stroke="#eee" stroke-width="1.400"/></svg></button>
            <button aria-label="Telegram"><svg viewBox="0 0 18 18"><circle cx="9" cy="9" r="8.500" fill="#38a4dc"/><path d="M3.500 9l10-4-2 8.500-3-2-1.500 1.500V10z" fill="#fff"/></svg></button>
            <button aria-label="Chrome"><svg viewBox="0 0 18 18"><circle cx="9" cy="9" r="8.500" fill="#e8453a"/><path d="M1.600 5A8.500 8.500 0 0 0 8.500 17.500L12 11 6 11z" fill="#3aa757"/><path d="M9 5.500h7.700A8.500 8.500 0 0 1 8.500 17.500L12.500 10z" fill="#fbc116"/><circle cx="9" cy="9" r="4" fill="#fff"/><circle cx="9" cy="9" r="3" fill="#4285f4"/></svg></button>
            <button class="open" aria-label="OBS"><svg viewBox="0 0 18 18"><circle cx="8.500" cy="9.500" r="7.500" fill="#1a1a1a" stroke="#aaa"/><path d="M7 4c-1 3 0 5 2 5.500 3 0 4 2 3 4.500M9 9.500c-1 3-3 3-5 1.500" fill="none" stroke="#ccc" stroke-width="1.300"/><circle cx="14.500" cy="3.500" r="3.500" fill="#d8141c"/></svg></button>
        </div>
        <div class="tray">
            <svg class="icon-s"><use href="#i-up"/></svg>
            <svg viewBox="0 0 18 18"><path d="M5 14a4 4 0 0 1 0-7c2-4 7-4 8 0 5 0 5 7 0 7z" fill="#ccc"/></svg>
            <svg viewBox="0 0 18 18" class="mic"><rect x="7" y="2" width="4" height="8" rx="2"/><path d="M4 8c0 6 10 6 10 0M9 13v3"/></svg>
            <span class="lang">ESP<br>LAA</span>
            <svg viewBox="0 0 18 18" class="wifi"><path d="M2 8c4-4 10-4 14 0M4.500 10.500c3-2.500 6-2.500 9 0M7 13c1-1 3-1 4 0L9 15z"/></svg>
            <svg viewBox="0 0 18 18" class="wifi"><path d="M2 7h3l4-4v12l-4-4H2zM12 6c1.500 2 1.500 4 0 6M14.500 4c3 3 3 7 0 10"/></svg>
            <svg viewBox="0 0 18 18"><rect x="1" y="5" width="14" height="8" rx="2" fill="#e0a72e" stroke="#bbb"/><path d="M16.500 7.500v3" stroke="#bbb"/></svg>
            <span class="datetime">22:51<br>19/01/2026</span>
        </div>
    </footer>
    <script src="chart.js"></script>
</body>
</html>
```

FILE: styles.css
```css
* {
    box-sizing: border-box;
}

body {
    margin: 0;
    height: 100vh;
    display: flex;
    flex-direction: column;
    overflow: hidden;
    background-color: #0f0f0f;
    color: #dbdbdb;
    font-family: Lato, "Open Sans", sans-serif;
    font-size: 10px;
    line-height: 12px;
}

button {
    display: flex;
    align-items: center;
    justify-content: center;
    padding: 0;
    border: none;
    background: none;
    color: inherit;
    font: inherit;
    font-weight: 600;
    white-space: nowrap;
    cursor: pointer;
}

svg {
    flex: none;
    fill: none;
    stroke: currentColor;
}

.apps-row svg,
.avatar svg,
.weather svg {
    stroke: none;
}

.sprite {
    position: absolute;
    width: 0;
    height: 0;
}

.sprite [id^="flag-"],
.sprite [id^="coin-"] {
    stroke: none;
}

.icon {
    width: 18px;
    height: 18px;
}

.icon-m {
    width: 14px;
    height: 14px;
    stroke-width: 1.2;
}

.icon-s {
    width: 12px;
    height: 12px;
    stroke-width: 1.5;
}

.coin {
    width: 12px;
    height: 12px;
    stroke: none;
}

.coin.big {
    width: 16px;
    height: 16px;
}

.mark {
    width: 9px;
    height: 9px;
    stroke: none;
}

.cyan {
    fill: #22e6e2;
}

.blue {
    fill: #3f74e8;
}

.up {
    color: #2aa27c;
}

.down {
    color: #c22a4a;
}

.dim {
    color: #7a7a7a;
}

.sep {
    width: 1px;
    height: 14px;
    background-color: #3a3a3a;
}

.badge {
    position: absolute;
    top: -2px;
    right: -2px;
    min-width: 11px;
    height: 11px;
    padding: 0 2px;
    border-radius: 6px;
    background-color: #e0244a;
    color: #fff;
    font-size: 8px;
    line-height: 11px;
    text-align: center;
}

/* Window tabs */
.titlebar {
    display: flex;
    flex: none;
    height: 24px;
    background-color: #404040;
    font-size: 8px;
}

.tab {
    display: flex;
    align-items: center;
    gap: 4px;
    width: 157px;
    padding: 0 3px 0 8px;
    border-right: 1px solid #4c4c4c;
    background-color: #3b3b3b;
    white-space: nowrap;
}

.tab b {
    margin-left: -1px;
    font-size: 9px;
}

.tab.active {
    background-color: #0f0f0f;
}

.tab i {
    font-family: "DejaVu Sans", sans-serif;
    font-size: 7px;
    font-style: normal;
}

.tab .quote {
    font-weight: 700;
}

.tab .fade {
    flex: 1;
    min-width: 0;
    mask-image: linear-gradient(to right, #000 30%, rgba(0, 0, 0, 0.1));
}

.tab .coin + b + i + .quote + .fade {
    font-weight: 600;
}

.tab-close {
    margin-left: -4px;
}

.new-tab {
    width: 22px;
    color: #aaa;
}

.window-buttons {
    display: flex;
    margin-left: auto;
}

.window-buttons button {
    width: 34px;
}

/* Top toolbar */
.toolbar {
    display: flex;
    align-items: center;
    flex: none;
    height: 29px;
    border-bottom: 2px solid #2e2e2e;
}

.avatar {
    position: relative;
    width: 19px;
    height: 19px;
    margin: 0 8px;
}

.avatar svg {
    width: 19px;
    height: 19px;
}

.avatar .badge {
    right: -6px;
}

.symbol-box {
    display: flex;
    width: 101px;
    height: 20px;
    border: 1px solid #3f3f3f;
    border-radius: 10px;
}

.symbol-search {
    gap: 2px;
    width: 67px;
    border-right: 1px solid #3f3f3f;
    font-size: 9px;
    font-weight: 700;
}

.symbol-fav {
    flex: 1;
}

.cell {
    width: 25px;
    height: 24px;
}

.cell.slim {
    width: 20px;
}

.cell.wide {
    width: 30px;
}

.cell + .sep {
    margin-left: 4px;
}

.cell.wide + .sep,
.cell.slim + .sep {
    margin-left: 2px;
}

.intervals {
    display: flex;
    justify-content: space-between;
    width: 311px;
    margin: 0 3px;
}

.intervals button {
    height: 22px;
    padding: 0 3px;
    border-radius: 3px;
}

.intervals .on {
    background-color: #3a3a3a;
}

.labelled {
    gap: 2px;
    padding: 0 7px 0 5px;
}

.labelled.ind {
    padding-right: 2px;
}

.replay-btn {
    gap: 6px;
    width: 86px;
    height: 23px;
    margin-right: 3px;
    border-radius: 4px;
    background-color: #f2f2f2;
    color: #2a2a2a;
}

.toolbar-right {
    display: flex;
    align-items: center;
    margin-left: auto;
    padding-right: 3px;
}

.layout-name {
    gap: 4px;
    margin: 0 4px 0 5px;
    font-size: 9px;
}

.round {
    width: 15px;
    height: 15px;
    margin-right: 4px;
    border: 1px solid #3f3f3f;
    border-radius: 50%;
    font-size: 7px;
}

.round.on {
    border-color: #fff;
    background-color: #fff;
    color: #111;
}

.toolbar-right .sep {
    margin: 0 2px 0 5px;
}

.pill {
    width: 51px;
    height: 19px;
    margin-left: 5px;
    border-radius: 10px;
    background-color: #f2f2f2;
    color: #222;
}

.pill.dark {
    width: 48px;
    border: 1px solid #333;
    background-color: #000;
    color: #f2f2f2;
    font-weight: 700;
}

/* Workspace */
.workspace {
    display: flex;
    flex: 1;
    gap: 3px;
    min-height: 0;
    background-color: #2e2e2e;
}

.tools {
    display: flex;
    flex-direction: column;
    align-items: center;
    gap: 2px;
    width: 34px;
    padding: 6px 0 12px;
    background-color: #0f0f0f;
}

.tools button {
    width: 23px;
    height: 23px;
    border-radius: 4px;
}

.tools button.on,
.rail button.on {
    background-color: #333;
}

.tools hr {
    width: 24px;
    margin: 3px 0 4px;
    border: none;
    border-top: 1px solid #3a3a3a;
}

.tools .star {
    margin-top: auto;
    background-color: #f2f2f2;
    color: #222;
}

.center {
    display: flex;
    flex: 1;
    flex-direction: column;
    min-width: 0;
}

.chart {
    display: grid;
    grid-template: minmax(0, 1fr) 19px / minmax(0, 1fr) 41px;
    flex: 1;
    min-height: 0;
    border-top-left-radius: 3px;
    background-color: #989aa3;
    color: #fff;
    overflow: hidden;
}

.stage {
    position: relative;
    overflow: hidden;
}

.plot {
    display: block;
    width: 100%;
    height: 100%;
    stroke: none;
}

.line {
    fill: none;
    stroke: #fff;
}

.line.soft {
    stroke: #cfd0d6;
}

.line.thin {
    stroke: #ececf0;
}

.line.thick {
    stroke-width: 2;
}

.zone {
    fill: #757677;
    stroke: #fff;
}

.dotted {
    stroke: #6a6c73;
    stroke-dasharray: 1 2;
}

.legend {
    position: absolute;
    top: 5px;
    left: 6px;
    display: flex;
    align-items: center;
    gap: 2px;
}

.legend h1 {
    margin: 0;
    font-size: 10px;
    font-weight: 700;
    white-space: nowrap;
}

.legend .cyan {
    margin: 0 6px 0 8px;
}

.replay-dot {
    display: flex;
    padding: 1px;
    border-radius: 50%;
    background-color: #2d55e0;
}

.replay-dot .icon-s,
.replay-chip .icon-s {
    width: 10px;
    height: 10px;
    fill: currentColor;
}

.orders {
    position: absolute;
    top: 22px;
    left: 6px;
    display: flex;
    gap: 5px;
}

.order {
    flex-direction: column;
    width: 45px;
    height: 22px;
    border-radius: 3px;
    font-size: 7px;
    line-height: 9px;
}

.order b {
    font-size: 8px;
}

.order sup {
    font-size: 7px;
    line-height: 0;
    vertical-align: 1px;
}

.sell {
    background-color: #e0244a;
}

.buy {
    width: 48px;
    background-color: #2d5cf0;
}

.qty {
    display: flex;
    flex-direction: column;
    align-items: center;
    width: 24px;
    margin-top: -2px;
    color: #222;
    font-size: 7px;
    line-height: 8px;
}

.qty input {
    width: 24px;
    height: 14px;
    margin-top: 2px;
    padding: 0;
    border: 1px solid #e8e8e8;
    border-radius: 4px;
    background: none;
    color: #555;
    font: inherit;
    font-size: 8px;
    text-align: center;
}

.favbar {
    position: absolute;
    top: 25px;
    left: 374px;
    display: flex;
    align-items: center;
    width: 395px;
    height: 25px;
    border-radius: 3px;
    background-color: #1c1c1c;
    box-shadow: 0 1px 3px rgba(0, 0, 0, 0.5);
    color: #dbdbdb;
}

.favbar button {
    flex: 1;
}

.grip {
    width: 16px;
    color: #666;
    text-align: center;
}

.zoom-nav {
    position: absolute;
    bottom: 21px;
    left: 469px;
    display: flex;
    gap: 6px;
}

.zoom-nav button {
    width: 16px;
    height: 16px;
    border-radius: 2px;
    background-color: #2b2b2b;
    box-shadow: 0 1px 2px rgba(0, 0, 0, 0.4);
}

.zoom-nav .apart {
    margin-left: 4px;
}

.tv-mark {
    position: absolute;
    bottom: 7px;
    left: 7px;
    width: 24px;
    height: 14px;
    fill: #111;
    stroke: #fff;
    stroke-width: 2;
    paint-order: stroke;
}

.axis-name {
    position: absolute;
    right: 0;
    display: flex;
    align-items: center;
    height: 11px;
    padding: 0 2px;
    background-color: #000;
    font-size: 8px;
    font-weight: 700;
}

.axis-name.plus {
    top: 253px;
    height: 14px;
    padding: 0;
}

.axis-name.sym {
    top: 308px;
}

.axis-name.min {
    top: 405px;
    background-color: #e6f2fb;
    color: #333;
    font-weight: 400;
}

.price-axis {
    position: relative;
    display: flex;
    flex-direction: column;
    justify-content: space-between;
    padding: 30px 0 4px 5px;
    border-left: 1px solid #33343a;
    font-size: 8px;
    font-weight: 700;
}

.currency {
    position: absolute;
    top: 3px;
    left: 2px;
    width: 36px;
    height: 17px;
    padding: 0 2px;
    border: none;
    border-radius: 3px;
    appearance: none;
    background-color: #fff;
    color: #333;
    font: inherit;
    font-weight: 400;
}

.currency-arrow {
    position: absolute;
    top: 7px;
    left: 28px;
    width: 9px;
    height: 9px;
    stroke: #222;
    stroke-width: 2;
}

.tag {
    position: absolute;
    left: 0;
    width: 37px;
    height: 11px;
    padding-left: 5px;
    background-color: #000;
    line-height: 11px;
}

.tag.cursor {
    top: 253px;
    height: 14px;
    line-height: 14px;
}

.tag.last {
    top: 308px;
}

.tag.entry {
    top: 326px;
}

.tag.stop {
    top: 367px;
    background-color: #8e0fa0;
}

.tag.low {
    top: 405px;
    background-color: #e6f2fb;
    color: #333;
    font-weight: 400;
}

.time-axis {
    position: relative;
    display: grid;
    grid-template-columns: repeat(23, minmax(0, 1fr));
    align-items: center;
    justify-items: center;
    padding: 0 12px 0 16px;
    border-top: 1px solid #83858d;
    font-size: 8px;
    font-weight: 700;
}

.time-tag {
    position: absolute;
    top: 0;
    left: 672px;
    display: flex;
    justify-content: center;
    gap: 7px;
    width: 90px;
    height: 16px;
    background-color: #000;
    line-height: 17px;
    white-space: nowrap;
}

.axis-settings {
    border-top: 1px solid #83858d;
    border-left: 1px solid #33343a;
    color: #222;
}

/* Bars below the chart */
.replay-bar {
    display: flex;
    align-items: center;
    flex: none;
    height: 33px;
    padding: 0 13px 0 31px;
    background-color: #0f0f0f;
}

.replay-controls {
    display: flex;
    align-items: center;
    justify-content: center;
    flex: 1;
    gap: 10px;
}

.replay-controls button {
    gap: 4px;
}

.replay-controls .gap-left {
    margin-left: 3px;
}

.range-bar {
    display: flex;
    align-items: center;
    flex: none;
    gap: 6px;
    height: 26px;
    padding: 0 6px 0 10px;
    border-top: 1px solid #2e2e2e;
    background-color: #0f0f0f;
    font-size: 9px;
}

.range-bar .sep {
    margin: 0 2px;
}

.utc {
    margin-left: auto;
    font-weight: 600;
}

.account-bar {
    display: flex;
    align-items: center;
    flex: none;
    gap: 8px;
    height: 25px;
    margin-top: 3px;
    padding-right: 6px;
    background-color: #1e1e1e;
    font-weight: 600;
}

.account-tab {
    display: flex;
    align-items: center;
    gap: 5px;
    height: 25px;
    padding: 0 5px;
    background-color: #0f0f0f;
}

.replay-chip {
    position: relative;
    display: flex;
    align-items: center;
    justify-content: center;
    width: 17px;
    height: 17px;
    border-radius: 3px;
    background-color: #f2f2f2;
    color: #111;
}

.replay-chip::after {
    content: "";
    position: absolute;
    top: -1px;
    right: -1px;
    width: 4px;
    height: 4px;
    border-radius: 50%;
    background-color: #2aa27c;
}

.outline {
    width: 46px;
    height: 17px;
    border: 1px solid #3f3f3f;
    border-radius: 3px;
}

.panel-name {
    margin-right: auto;
}

/* Watchlist */
.watch {
    position: relative;
    display: flex;
    flex-direction: column;
    width: 133px;
    background-color: #0f0f0f;
}

.watch-head,
.watch-foot {
    display: flex;
    align-items: center;
    height: 32px;
    padding: 0 10px;
}

.watch-head b {
    margin: 0 2px 0 5px;
}

.watch-head button,
.watch-foot button {
    width: 25px;
    height: 25px;
}

.watch-head button:nth-of-type(1),
.watch-foot button:nth-of-type(1) {
    margin-left: auto;
}

.watch-head button:last-child,
.watch-foot button:last-child {
    margin-right: -5px;
}

.watch-foot {
    margin-top: auto;
    border-top: 3px solid #2e2e2e;
}

.watch-foot b {
    margin-left: 4px;
}

.watch-lists {
    display: flex;
    padding: 4px 10px 3px;
}

.watch table {
    width: 100%;
    border-collapse: separate;
    border-spacing: 0;
    border-bottom: 1px solid #2e2e2e;
}

.watch th {
    height: 21px;
    padding: 0 10px;
    border-bottom: 1px solid #3a3a3a;
    color: #8c8c8c;
    font-weight: 400;
    text-align: left;
}

.watch thead::after {
    content: "";
    display: block;
    height: 4px;
}

.watch td {
    height: 20px;
    padding: 0;
    font-size: 9px;
    font-weight: 600;
}

.watch td .mark,
.watch td .coin {
    margin-right: 2px;
    vertical-align: -2px;
}

.watch td .coin {
    width: 13px;
    height: 13px;
    margin-right: 3px;
    vertical-align: -3px;
}

.watch th:last-child,
.watch td:last-child {
    padding-right: 10px;
    text-align: right;
}

.watch td:last-child {
    color: #2aa27c;
}

.watch tr.on {
    outline: 1px solid #9a9a9a;
    outline-offset: -1px;
    border-radius: 3px;
}

.handle {
    position: absolute;
    bottom: 40px;
    left: -2px;
    width: 6px;
    height: 16px;
    border: 1px solid #444;
    border-radius: 2px;
    background-color: #0f0f0f;
}

.rail {
    display: flex;
    flex-direction: column;
    align-items: center;
    gap: 4px;
    width: 31px;
    margin-left: -3px;
    padding: 3px 0;
    border-left: 1px solid #2e2e2e;
    background-color: #0f0f0f;
}

.rail button {
    position: relative;
    width: 25px;
    height: 26px;
    border-radius: 4px;
}

.rail .push {
    margin-top: auto;
}

.rail .apps {
    height: 25px;
    border-radius: 50%;
    background-color: #fff;
}

.apps svg {
    width: 24px;
    height: 24px;
    fill: #111;
    stroke: none;
}

.rail hr {
    width: 22px;
    margin: 1px 0 2px;
    border: none;
    border-top: 1px solid #3a3a3a;
}

/* Windows taskbar */
.taskbar {
    display: grid;
    grid-template-columns: 1fr auto 1fr;
    align-items: center;
    flex: none;
    height: 32px;
    border-top: 1px solid #3a3a3a;
    background-color: #1c1c1c;
    font-family: "Open Sans", "Noto Sans", sans-serif;
    font-size: 8px;
    line-height: 11px;
}

.weather {
    position: relative;
    display: flex;
    align-items: center;
    gap: 3px;
    padding-left: 10px;
}

.weather svg {
    width: 20px;
    height: 20px;
}

.weather-n {
    position: absolute;
    top: 0;
    left: 22px;
    color: #222;
}

.apps-row {
    display: flex;
    align-items: center;
}

.apps-row button {
    position: relative;
    width: 25px;
    height: 26px;
    margin: 0 2px;
    border-radius: 4px;
}

.apps-row button > svg {
    width: 17px;
    height: 17px;
}

.apps-row .badge {
    top: 1px;
    background-color: #e88a92;
    color: #222;
}

.apps-row .current {
    background-color: #2c2c2c;
}

.apps-row .current::after,
.apps-row .open::after {
    content: "";
    position: absolute;
    bottom: 0;
    width: 10px;
    height: 2px;
    border-radius: 1px;
    background-color: #e88a92;
}

.apps-row .open::after {
    width: 4px;
    background-color: #999;
}

.task-search {
    display: flex;
    align-items: center;
    gap: 3px;
    width: 142px;
    height: 22px;
    margin: 0 6px 0 2px;
    padding: 0 2px 0 5px;
    border: 1px solid #444;
    border-radius: 11px;
    background-color: #333;
}

.task-search .icon-m {
    stroke: #ddd;
}

.task-search input {
    flex: 1;
    min-width: 0;
    padding: 0;
    border: none;
    background: none;
    color: #ddd;
    font: inherit;
    font-size: 9px;
}

.task-search input::placeholder {
    color: #c8c8c8;
}

.art {
    width: 32px;
    height: 18px;
}

.tray {
    display: flex;
    align-items: center;
    justify-content: flex-end;
    gap: 6px;
    padding-right: 13px;
    text-align: center;
}

.tray svg {
    width: 12px;
    height: 12px;
    stroke-width: 1.5;
}

.tray svg:not(.mic):not(.wifi):not(.icon-s) {
    width: 14px;
    height: 14px;
}

.tray .mic {
    color: #c98a6a;
}

.lang {
    padding: 0 10px 0 8px;
}

.datetime {
    margin-left: 3px;
    text-align: right;
}
```

FILE: chart.js
```js
// One candle per entry: x, high, body top, body bottom, low, kind
// kind: u = up, d = down, n = dark blue
const CANDLES = `
46 53 53 56 58 d|49 53 55 60 63 u|51 53 54 62 66 d|54 54 58 62 66 d|57 58 62 66 70 d|60 57 60 66 72 u|66 53 57 66 75 u|69 62 66 74 78 u
72 90 94 101 102 d|74 90 97 105 108 d|76 100 103 110 127 d|78 101 104 108 112 u|81 98 102 118 131 u|83 99 102 108 113 u|86 99 100 105 109 u|90 98 102 108 113 d
92 105 108 130 131 d|95 118 121 128 153 u|97 112 118 128 129 u|100 107 111 119 120 u|102 109 110 116 117 u|104 103 106 112 131 u|107 105 108 110 113 d|109 106 108 118 120 d
112 112 115 125 127 d|114 121 124 134 135 d|117 130 133 148 149 d|120 147 148 149 150 d|122 148 149 158 166 d|124 150 155 162 166 d|127 158 162 165 167 d|129 158 160 166 166 u
131 143 147 160 162 u|134 139 147 156 163 d|136 148 151 156 159 u|139 144 149 152 157 u|141 128 131 150 151 u|143 127 132 139 143 d|146 137 140 145 150 d|148 139 144 146 152 u
150 139 147 149 150 u|153 136 139 148 150 u|156 120 121 140 142 u|158 115 118 131 133 u|162 107 116 131 133 d|165 127 131 136 143 d|168 130 134 137 138 u|171 119 129 134 137 u
174 132 134 166 174 d|177 160 166 173 183 d|180 163 170 175 180 d|183 165 169 174 176 u|186 146 147 176 190 u|188 130 137 152 157 u|190 120 127 140 142 u|193 115 123 131 136 n
195 123 125 156 158 d|197 154 155 157 170 d|199 100 102 155 156 u|202 76 95 103 125 u|204 85 92 97 110 u|207 94 95 131 132 d|209 120 128 131 134 d|212 122 132 134 146 d
214 95 100 130 135 u|217 93 98 120 128 u|219 96 97 130 138 u|221 95 96 140 142 d|224 118 125 140 148 u|226 108 112 128 132 u|229 95 98 118 122 u|231 78 94 98 110 n
233 75 93 97 121 u|235 90 93 158 160 d|238 145 146 160 174 u|242 143 148 155 160 u|243 148 149 171 172 d|245 160 166 168 177 u|248 148 166 171 178 d|251 168 170 176 214 d
253 154 176 194 195 d|256 180 194 196 200 u|258 192 194 203 229 d|260 198 204 213 215 u|262 190 205 215 216 u|265 174 176 198 200 u|267 161 177 182 200 d|270 180 182 199 202 d
272 180 182 198 200 u|274 177 179 183 185 u|277 167 179 193 194 d|280 191 193 248 252 d|282 210 212 248 249 u|284 187 190 215 228 u|287 187 189 215 216 d|290 190 193 215 217 u
292 175 178 205 206 u|294 165 170 185 188 u|297 160 170 174 176 u|299 157 170 181 182 d|301 170 181 195 202 d|304 187 194 199 203 d|306 188 193 212 214 u|309 192 193 214 215 d
311 213 215 223 225 d|314 215 223 232 246 d|316 221 232 242 250 d|318 230 235 249 252 d|321 246 247 248 250 u|323 220 232 248 282 u|326 204 210 238 240 u|328 192 212 218 225 u
331 211 212 234 235 d|333 233 235 268 269 d|336 240 268 272 281 d|338 265 277 279 283 d|340 277 278 301 305 d|343 294 296 301 302 u|346 294 295 304 306 d|348 300 304 321 334 d
351 312 321 335 338 d|353 299 305 333 335 u|355 304 306 318 319 d|358 290 304 317 319 u|360 288 290 311 312 u|363 290 291 313 315 n|365 310 311 314 315 d|367 300 303 314 316 u
370 300 304 340 342 d|372 338 340 363 368 d|375 350 354 363 366 u|377 340 346 357 360 u|380 330 343 345 348 u|382 342 344 358 389 d|384 336 350 372 374 u|387 350 353 368 371 d
389 358 365 370 372 d|392 358 361 367 376 u|395 355 358 366 384 d|397 340 345 362 364 u|399 334 336 360 362 u|402 320 321 337 338 u|404 319 321 337 338 n|406 334 336 340 352 u
408 311 336 357 370 d|411 354 356 358 388 d|413 288 293 359 361 u|416 290 293 318 350 n|418 308 310 346 352 d|421 347 348 350 352 d|423 325 327 350 352 u|426 317 327 349 351 n
428 348 349 421 463 d|431 383 384 422 424 u|433 334 335 384 385 u|435 320 328 338 340 u|437 329 330 338 362 d|440 320 322 338 340 u|443 300 318 330 332 u|445 308 309 328 330 u
447 303 307 337 352 n|450 320 325 337 340 u|452 302 306 312 320 u|454 298 306 326 328 d|457 326 327 350 352 d|459 345 350 366 367 d|462 355 366 377 380 d|464 370 378 387 407 d
467 375 386 389 391 d|469 373 385 403 405 n|472 385 389 403 404 u|474 388 389 391 392 d|477 390 391 420 421 d|480 415 418 420 421 d|483 405 410 420 422 u|485 380 382 412 413 u
487 370 374 392 395 u|489 360 366 376 380 u|491 365 366 381 383 d|494 370 373 382 384 u|496 362 373 391 392 n|498 387 391 416 418 d|501 415 417 437 438 d|504 427 430 438 441 u
507 416 420 432 435 u|509 408 411 422 424 u|511 399 400 412 413 n|514 395 398 409 411 u|516 385 396 405 407 u|518 370 380 405 406 u|520 375 380 388 390 n|523 378 380 390 393 u
525 375 381 388 396 d|528 376 377 388 389 u|531 367 368 377 378 u|533 366 368 372 373 d|536 368 369 374 376 d|538 370 374 384 386 d|541 375 383 394 395 d|543 383 391 400 404 d
546 392 393 408 409 d|548 402 403 408 409 d|550 398 402 408 410 u|553 393 396 404 406 u|556 392 394 400 401 u|558 395 396 404 406 d|561 403 405 423 436 d|564 413 415 424 426 u
566 408 412 416 418 u|569 400 403 413 415 u|571 395 401 404 406 n|574 400 402 404 408 u|576 396 404 408 409 d|579 403 407 420 421 d|582 408 412 420 421 n|584 408 410 414 416 u
586 405 414 416 417 d|589 405 411 413 414 d|591 408 413 422 423 d|594 416 421 425 426 d|596 420 424 433 440 d|599 428 432 442 443 d|601 420 425 437 438 u|604 421 423 426 427 u
607 417 421 425 426 d|610 424 425 428 429 d|613 423 427 431 432 d|616 414 415 431 432 u|618 408 410 418 419 u|621 407 409 411 412 u|624 408 410 416 417 d|627 414 419 426 434 d
630 390 407 424 425 u|632 402 406 410 411 d|635 404 407 419 420 n|637 383 394 419 420 u|640 390 395 402 403 d|642 396 400 406 407 d|645 402 406 409 410 d|648 404 407 409 410 u
651 405 407 409 411 u|653 402 404 409 410 u|656 390 398 408 410 u|658 389 390 414 415 d|661 402 404 412 413 u|663 408 412 416 417 u|666 405 408 412 413 u|669 408 410 415 416 d
672 413 414 424 425 n|675 410 414 423 424 u|678 402 406 416 418 u|681 402 404 408 409 u|684 398 402 406 407 u|687 402 404 406 407 d|690 398 400 408 409 u|693 388 392 402 403 u
695 385 390 396 398 u|698 383 388 400 401 n|701 392 396 402 403 d|703 382 384 400 401 u|706 376 380 385 386 u|708 352 355 380 381 u|711 340 345 356 357 u|713 345 346 358 359 d
716 345 350 358 359 u|719 320 337 350 352 n|721 336 338 362 363 d|724 355 360 362 374 d|727 340 342 363 364 u|729 333 342 352 353 n|732 349 350 379 382 d|734 354 356 376 378 u
737 345 356 360 361 d|740 352 357 360 361 u|742 342 355 360 361 n|744 350 357 358 360 u|747 356 358 395 396 d|750 388 390 397 398 u|752 372 376 394 396 u|755 355 358 376 378 u
757 323 333 363 364 u|759 330 334 338 339 d|762 314 318 340 352 u|764 297 304 325 326 u|767 299 302 332 333 d|769 318 322 332 335 u|772 315 320 323 330 u|774 320 321 341 342 d
776 334 336 352 353 u|779 328 335 337 340 u|783 335 336 350 351 d|786 349 350 367 368 d|789 360 366 368 370 d
`;

const COLORS = { u: '#3566c4', d: '#07090e', n: '#142c68' };

function bar(x, y, width, height, fill) {
    const rect = document.createElementNS('http://www.w3.org/2000/svg', 'rect');
    rect.setAttribute('x', x);
    rect.setAttribute('y', y);
    rect.setAttribute('width', width);
    rect.setAttribute('height', height);
    rect.setAttribute('fill', fill);
    return rect;
}

function drawCandles() {
    const group = document.getElementById('candles');
    CANDLES.trim().split(/[|\n]/).forEach(row => {
        const [x, high, top, bottom, low, kind] = row.split(' ');
        const color = COLORS[kind];
        group.appendChild(bar(+x, +high, 1, low - high, color));
        group.appendChild(bar(x - 0.5, +top, 2, Math.max(1, bottom - top), color));
    });
}

drawCandles();
```
